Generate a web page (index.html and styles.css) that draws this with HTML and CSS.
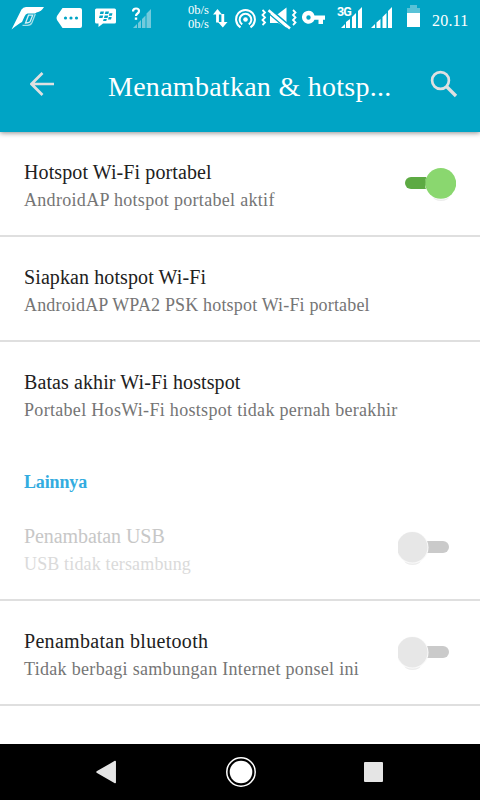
FILE: index.html
```
<!DOCTYPE html>
<html lang="id">
<head>
    <meta charset="utf-8">
    <title>Menambatkan &amp; hotspot</title>
    <link rel="stylesheet" href="styles.css">
</head>
<body>
<header class="app-header">
    <div class="status-bar">
        <!-- Notification icons -->
        <div class="notifications">
            <svg width="34" height="36" viewBox="11 0 34 36">
                <path d="M11.500 29.500 21.500 9.500Q23 7 26 7H44Q41.500 11.500 36.500 12.500L35 13.500H27.500Q25.500 14 24.500 16.500L22 22Q18 24 11.500 29.500Z" fill="#fff"/>
                <path d="M28.500 15.200H32.700L30.300 21.300Q29.500 23 25.500 23Z" fill="none" stroke="#d5f0f5" stroke-width="1.300"/>
                <path d="M22.500 25.300H27.500Q30.800 25.300 32 22.500L35.300 14" fill="none" stroke="#a5dfe9" stroke-width="1.300"/>
            </svg>
            <svg width="27" height="36" viewBox="56 0 27 36">
                <path d="M62.500 8H80Q82 8 82 10V26Q82 28 80 28H62.500L57 20Q56 18 57 16Z" fill="#fff"/>
                <g fill="#00a4c5"><circle cx="65.500" cy="18" r="1.600"/><circle cx="71" cy="18" r="1.600"/><circle cx="76.500" cy="18" r="1.600"/></g>
            </svg>
            <svg width="22" height="36" viewBox="95 0 22 36">
                <path d="M96.500 8.500H114.500Q116 8.500 116 10V22Q116 23.500 114.500 23.500H103L98.500 27V23.500H96.500Q95 23.500 95 22V10Q95 8.500 96.500 8.500Z" fill="#fff"/>
                <g fill="#00a4c5">
                    <path d="M100.500 11.500h3.500l-.7 2.500h-3.500zM105.500 11.500h3.500l-.7 2.500h-3.500zM99.700 15.500h3.500l-.7 2.500h-3.500zM104.700 15.500h3.500l-.7 2.500h-3.500zM109.500 13.300h3l-.7 2.400h-3zM108.700 17h3l-.7 2.400h-3zM103.700 19h3.200l-.7 2h-3.200z"/>
                </g>
            </svg>
            <svg width="20" height="36" viewBox="132 0 20 36">
                <path d="M133 28 137 24V28ZM138 28V23L141 20V28ZM142 28V19L145.500 15.500V28ZM146.500 28V13.500L151 9V28Z" fill="#73cadc"/>
                <path d="M133 11.500Q133 8.500 136 8.500Q139 8.500 139 11Q139 12.500 137.500 13.500Q136 14.500 136 16" fill="none" stroke="#fff" stroke-width="2.200"/>
                <path d="M134.800 17.500h2.400v2.300h-2.400z" fill="#fff"/>
            </svg>
        </div>
        <!-- System icons -->
        <div class="system">
            <div class="speed"><span>0b/s</span><span>0b/s</span></div>
            <svg class="arrows" width="15" height="36" viewBox="213 0 15 36">
                <path d="M217.500 12V22.500M222.800 14V25" stroke="#fff" stroke-width="2.800"/>
                <path d="M213 14.500 217.500 9 222 14.500ZM218 22 222.800 27.500 227.500 22Z" fill="#fff"/>
            </svg>
            <svg class="hotspot" width="22" height="36" viewBox="235 0 22 36">
                <circle cx="245.500" cy="19.500" r="2.300" fill="#fff"/>
                <path d="M242.200 24.400A5.800 5.800 0 1 1 248.800 24.400M240.500 27.300A9.400 9.400 0 1 1 250.500 27.300" fill="none" stroke="#fff" stroke-width="2"/>
            </svg>
            <svg class="mute" width="36" height="36" viewBox="261 0 36 36">
                <path d="M270 14H278L286.500 7.500V28L278 23H270Z" fill="#fff"/>
                <path d="M269.500 8.500 291 27" stroke="#00a4c5" stroke-width="1.800"/>
                <path d="M267.500 12.500 289 31" stroke="#00a4c5" stroke-width="1.300"/>
                <path d="M268.500 10.300 290 28.500" stroke="#fff" stroke-width="2.500"/>
                <path d="M262.500 10 265 12.500 262.500 15 265 17.500 262.500 20 265 22.500 262.500 25M293 10 295.500 12.500 293 15 295.500 17.500 293 20 295.500 22.500 293 25" fill="none" stroke="#fff" stroke-width="1.800"/>
            </svg>
            <svg class="key" width="24" height="36" viewBox="302 0 24 36">
                <path d="M308.500 10.700A6.500 6.500 0 1 0 314.500 19.700H318.500V24H323V19.700H325V15.500H314.500A6.500 6.500 0 0 0 308.500 10.700ZM308.500 15.300A2.200 2.200 0 1 1 308.500 19.700A2.200 2.200 0 1 1 308.500 15.300Z" fill="#fff"/>
            </svg>
            <div class="signal">
                <span class="network">3G</span>
                <svg width="22" height="36" viewBox="340 0 22 36">
                    <path d="M341 28 345 24V28ZM346 28V22L350 19V28ZM352 28V17L356 13V28ZM358 28V11L362 7V28Z" fill="#fff"/>
                </svg>
            </div>
            <svg class="signal-two" width="22" height="36" viewBox="371 0 22 36">
                <path d="M371 28 375 24V28ZM376.500 28V22.500L380.500 19V28ZM382.500 28V17L386.500 13V28ZM388 28V11L392 7V28Z" fill="#fff"/>
            </svg>
            <svg class="battery" width="13" height="36" viewBox="407 0 13 36">
                <path d="M407 13V8H410V5H417V8H420V13Z" fill="#59c2d7"/>
                <path d="M407 13H420V27H407Z" fill="#fff"/>
            </svg>
            <span class="clock">20.11</span>
        </div>
    </div>
    <div class="toolbar">
        <svg class="back" width="24" height="24" viewBox="0 0 24 24">
            <path d="M24 12H2M12.500 1 1.500 12 12.500 23" fill="none" stroke="#dfe0e1" stroke-width="2.700"/>
        </svg>
        <h1>Menambatkan &amp; hotsp...</h1>
        <svg class="search" width="28" height="28" viewBox="0 0 28 28">
            <circle cx="10.500" cy="10.500" r="8.400" fill="none" stroke="#dfe0e1" stroke-width="2.700"/>
            <path d="M16.500 16.500 26 26" stroke="#dfe0e1" stroke-width="3.300"/>
        </svg>
    </div>
</header>

<main>
    <div class="row">
        <div class="text">
            <div class="title">Hotspot Wi-Fi portabel</div>
            <div class="summary">AndroidAP hotspot portabel aktif</div>
        </div>
        <svg class="switch" width="58" height="44" viewBox="0 0 58 44">
            <rect x="7" y="16" width="40" height="12" rx="6" fill="#5daa43"/>
            <ellipse cx="43" cy="36" rx="8" ry="4" fill="#ededed"/>
            <circle cx="43" cy="22.500" r="16" fill="#fff"/>
            <ellipse cx="30" cy="22" rx="3" ry="6" fill="#5daa43"/>
            <circle cx="42.800" cy="22.300" r="15.400" fill="#8ad76f"/>
        </svg>
    </div>
    <div class="row setup">
        <div class="text">
            <div class="title">Siapkan hotspot Wi-Fi</div>
            <div class="summary">AndroidAP WPA2 PSK hotspot Wi-Fi portabel</div>
        </div>
    </div>
    <div class="row last">
        <div class="text">
            <div class="title">Batas akhir Wi-Fi hostspot</div>
            <div class="summary">Portabel HosWi-Fi hostspot tidak pernah berakhir</div>
        </div>
    </div>

    <h2>Lainnya</h2>

    <div class="row disabled">
        <div class="text">
            <div class="title">Penambatan USB</div>
            <div class="summary">USB tidak tersambung</div>
        </div>
        <svg class="switch" width="58" height="44" viewBox="0 0 58 44">
            <rect x="11" y="16" width="40" height="12" rx="6" fill="#cacaca"/>
            <ellipse cx="14.500" cy="36" rx="8" ry="4" fill="#ededed"/>
            <circle cx="14.500" cy="22.500" r="16" fill="#fafafa"/>
            <circle cx="14.300" cy="22.300" r="15.200" fill="#e7e7e7"/>
        </svg>
    </div>
    <div class="row bluetooth">
        <div class="text">
            <div class="title">Penambatan bluetooth</div>
            <div class="summary">Tidak berbagi sambungan Internet ponsel ini</div>
        </div>
        <svg class="switch" width="58" height="44" viewBox="0 0 58 44">
            <rect x="11" y="16" width="40" height="12" rx="6" fill="#cacaca"/>
            <ellipse cx="14.500" cy="36" rx="8" ry="4" fill="#ededed"/>
            <circle cx="14.500" cy="22.500" r="16" fill="#fafafa"/>
            <circle cx="14.300" cy="22.300" r="15.200" fill="#e7e7e7"/>
        </svg>
    </div>
</main>

<nav class="nav-bar">
    <svg width="22" height="24" viewBox="0 0 22 24">
        <path d="M2 12 20.200 1.500V22.500Z" fill="#e5e5e5" stroke="#e5e5e5" stroke-width="1.500" stroke-linejoin="round"/>
    </svg>
    <svg width="30" height="30" viewBox="0 0 30 30">
        <circle cx="15" cy="15" r="14.200" fill="none" stroke="#fff" stroke-width="1.500"/>
        <circle cx="15" cy="15" r="11.300" fill="#fff"/>
    </svg>
    <svg width="19" height="20" viewBox="0 0 19 20">
        <rect width="19" height="20" rx="1" fill="#e5e5e5"/>
    </svg>
</nav>
</body>
</html>
```
FILE: styles.css
```
* {
    box-sizing: border-box;
}

body {
    display: flex;
    flex-direction: column;
    width: 480px;
    height: 800px;
    margin: 0;
    background-color: #fff;
    font-family: "Liberation Serif", serif;
    overflow: hidden;
}

svg {
    display: block;
    flex-shrink: 0;
}

.app-header {
    height: 132px;
    background-color: #00a4c5;
    color: #fff;
    box-shadow: 0 1px 5px rgba(0, 0, 0, 0.45);
}

/* Status bar */
.status-bar {
    display: flex;
    justify-content: space-between;
    height: 36px;
    padding: 0 12px 0 11px;
}

.notifications {
    display: flex;
    gap: 12px;
}

.notifications svg:first-child {
    margin-right: -1px;
}

.notifications svg:last-child {
    margin-left: 3px;
}

.system {
    display: flex;
}

.speed {
    display: flex;
    flex-direction: column;
    width: 25px;
    padding-top: 3px;
    font-size: 12.5px;
    line-height: 14px;
}

.hotspot {
    margin-left: 7px;
}

.mute {
    margin-left: 4px;
}

.key {
    margin-left: 5px;
}

.signal {
    position: relative;
    margin-left: 14px;
}

.network {
    position: absolute;
    top: 4px;
    left: -3px;
    font-family: Roboto, sans-serif;
    font-size: 12.5px;
    font-weight: bold;
    line-height: 15px;
    letter-spacing: -0.9px;
}

.signal-two {
    margin-left: 9px;
}

.battery {
    margin-left: 14px;
}

.clock {
    width: 36px;
    margin-left: 12px;
    font-size: 16px;
    line-height: 41px;
    letter-spacing: 0.2px;
}

/* Toolbar */
.toolbar {
    display: flex;
    align-items: center;
    height: 96px;
    padding: 0 22px 0 30px;
}

.back {
    margin-bottom: 1px;
}

h1 {
    flex: 1;
    margin: 6px 0 0 54px;
    font-size: 28px;
    font-weight: normal;
    line-height: 36px;
    letter-spacing: 0.27px;
    white-space: nowrap;
}

/* Settings list */
main {
    flex: 1;
}

.row {
    display: flex;
    align-items: flex-start;
    justify-content: space-between;
    height: 105px;
    padding: 27px 24px 0;
    border-bottom: 2px solid #dfdfdf;
}

.row.last {
    border-bottom: none;
}

.text {
    white-space: nowrap;
}

.switch {
    margin-top: 2px;
}

.title {
    color: #212121;
    font-size: 20px;
    line-height: 27px;
    letter-spacing: 0.1px;
}

.summary {
    color: #757575;
    font-size: 18px;
    line-height: 28px;
    letter-spacing: 0.31px;
}

.setup .summary {
    letter-spacing: 0.17px;
}

.bluetooth .title {
    letter-spacing: 0.3px;
}

.disabled .title {
    color: #c7c7c7;
    letter-spacing: -0.07px;
}

.disabled .summary {
    color: #dadada;
    letter-spacing: 0.15px;
}

h2 {
    height: 49px;
    margin: 0;
    padding: 22px 24px 0;
    color: #33ace0;
    font-size: 18px;
    line-height: 27px;
    letter-spacing: -0.15px;
}

/* Navigation bar */
.nav-bar {
    display: flex;
    align-items: center;
    justify-content: space-between;
    height: 56px;
    padding: 0 97px 0 95px;
    background-color: #000;
}
```
